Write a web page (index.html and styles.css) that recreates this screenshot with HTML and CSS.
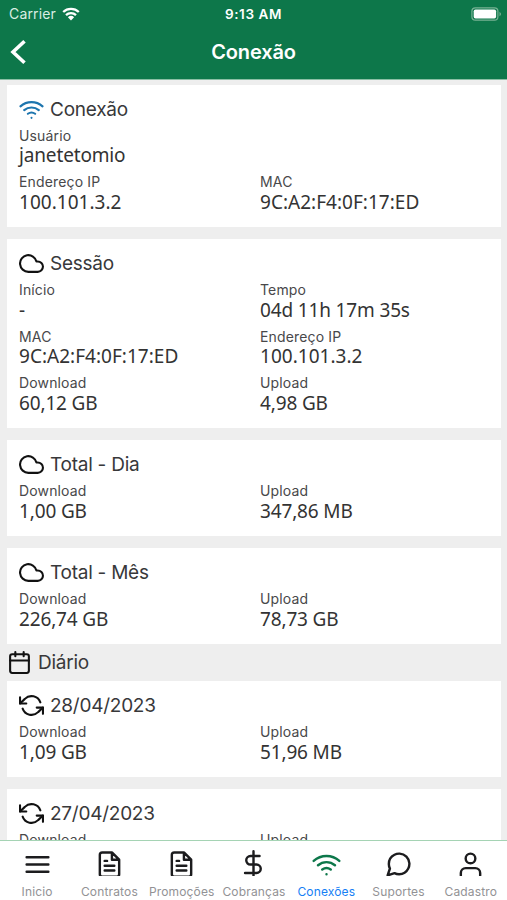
FILE: index.html
```html
<!DOCTYPE html>
<html lang="pt-BR">
<head>
<meta charset="utf-8">
<meta name="viewport" content="width=device-width, initial-scale=1">
<title>Conexão</title>
<link rel="stylesheet" href="styles.css">
</head>
<body>
<svg class="defs" aria-hidden="true">
  <symbol id="wifi" viewBox="0 0 24 24"><path d="M1.4 9a15.9 15.9 0 0 1 21.2 0M5 12.6a10.9 10.9 0 0 1 14 0M8.5 16.1a6 6 0 0 1 7 0M12 20h.01"/></symbol>
  <symbol id="cloud" viewBox="0 0 24 24"><path d="M18 10h-1.26A8 8 0 1 0 9 20h9a5 5 0 0 0 0-10z"/></symbol>
  <symbol id="calendar" viewBox="0 0 24 24"><rect x="3" y="4" width="18" height="18" rx="2"/><path d="M16 2v4M8 2v4M3 10h18"/></symbol>
  <symbol id="refresh" viewBox="0 0 24 24"><path d="M1 4v6h6M23 20v-6h-6"/><path d="M20.49 9A9 9 0 0 0 5.64 5.64L1 10m22 4l-4.64 4.36A9 9 0 0 1 3.51 15"/></symbol>
  <symbol id="file" viewBox="0 0 24 24"><path d="M14 2H6a2 2 0 0 0-2 2v16a2 2 0 0 0 2 2h12a2 2 0 0 0 2-2V8zM14 2v6h6M16 13H8M16 17H8M10 9H8"/></symbol>
</svg>
<div class="app">
  <header class="header">
    <div class="status">
      <div class="carrier"><span>Carrier</span>
        <svg class="signal" viewBox="0 0 18 14"><path d="M1.2 5a11.3 11.3 0 0 1 15.6 0M4 8.2a7.2 7.2 0 0 1 10 0" fill="none" stroke="#fff" stroke-width="2.3"/><path d="M5.9 10.2a4.5 4.5 0 0 1 6.2 0L9 13.5z" fill="#fff"/></svg>
      </div>
      <span class="clock">9:13 AM</span>
      <svg class="battery" viewBox="0 0 31 14"><rect x=".9" y=".8" width="26" height="12.4" rx="3.5" fill="none" stroke="#78b294" stroke-width="1.2"/><rect x="2.7" y="2.5" width="22.4" height="9" rx="1.8" fill="#fff"/><path d="M28.5 4.7q3 2.3 0 4.6z" fill="#78b294"/></svg>
    </div>
    <div class="nav">
      <svg class="back" viewBox="0 0 18 28"><path d="M15.5 3.2L4 14l11.5 10.8"/></svg>
      <h1>Conexão</h1>
    </div>
  </header>
  <main class="content">
    <section class="card">
      <h2><svg class="icon blue"><use href="#wifi"/></svg>Conexão</h2>
      <dl>
        <div class="wide"><dt>Usuário</dt><dd>janetetomio</dd></div>
        <div><dt>Endereço IP</dt><dd class="address">100.101.3.2</dd></div>
        <div><dt>MAC</dt><dd class="address">9C:A2:F4:0F:17:ED</dd></div>
      </dl>
    </section>
    <section class="card">
      <h2><svg class="icon"><use href="#cloud"/></svg>Sessão</h2>
      <dl>
        <div><dt>Início</dt><dd>-</dd></div>
        <div><dt>Tempo</dt><dd>04d 11h 17m 35s</dd></div>
        <div><dt>MAC</dt><dd class="address">9C:A2:F4:0F:17:ED</dd></div>
        <div><dt>Endereço IP</dt><dd class="address">100.101.3.2</dd></div>
        <div><dt>Download</dt><dd>60,12 GB</dd></div>
        <div><dt>Upload</dt><dd>4,98 GB</dd></div>
      </dl>
    </section>
    <section class="card">
      <h2><svg class="icon"><use href="#cloud"/></svg>Total - Dia</h2>
      <dl>
        <div><dt>Download</dt><dd>1,00 GB</dd></div>
        <div><dt>Upload</dt><dd>347,86 MB</dd></div>
      </dl>
    </section>
    <section class="card">
      <h2><svg class="icon"><use href="#cloud"/></svg>Total - Mês</h2>
      <dl>
        <div><dt>Download</dt><dd>226,74 GB</dd></div>
        <div><dt>Upload</dt><dd>78,73 GB</dd></div>
      </dl>
    </section>
    <h2 class="divider"><svg class="icon"><use href="#calendar"/></svg>Diário</h2>
    <section class="card">
      <h2><svg class="icon"><use href="#refresh"/></svg>28/04/2023</h2>
      <dl>
        <div><dt>Download</dt><dd>1,09 GB</dd></div>
        <div><dt>Upload</dt><dd>51,96 MB</dd></div>
      </dl>
    </section>
    <section class="card">
      <h2><svg class="icon"><use href="#refresh"/></svg>27/04/2023</h2>
      <dl>
        <div><dt>Download</dt><dd></dd></div>
        <div><dt>Upload</dt><dd></dd></div>
      </dl>
    </section>
  </main>
  <nav class="tabs">
    <a><svg viewBox="0 0 24 21.5"><path d="M3 6h18M3 12h18M3 18h18"/></svg><span>Inicio</span></a>
    <a><svg viewBox="0 0 24 21.5"><use href="#file" width="24" height="24"/></svg><span>Contratos</span></a>
    <a><svg viewBox="0 0 24 21.5"><use href="#file" width="24" height="24"/></svg><span>Promoções</span></a>
    <a><svg viewBox="0 0 24 21.5"><path d="M12 1v22M17 5H9.5a3.5 3.5 0 0 0 0 7h5a3.5 3.5 0 0 1 0 7H5"/></svg><span>Cobranças</span></a>
    <a class="active"><svg viewBox="0 0 24 21.5"><use href="#wifi" width="24" height="24"/></svg><span>Conexões</span></a>
    <a><svg viewBox="0 0 24 21.5"><path d="M21 11.5a8.38 8.38 0 0 1-.9 3.8 8.5 8.5 0 0 1-7.6 4.7 8.38 8.38 0 0 1-3.8-.9L3 21l1.9-5.7a8.38 8.38 0 0 1-.9-3.8 8.5 8.5 0 0 1 4.7-7.6 8.38 8.38 0 0 1 3.8-.9h.5a8.48 8.48 0 0 1 8 8z"/></svg><span>Suportes</span></a>
    <a><svg viewBox="0 0 24 21.5"><path d="M20 21v-2a4 4 0 0 0-4-4H8a4 4 0 0 0-4 4v2"/><circle cx="12" cy="7" r="4"/></svg><span>Cadastro</span></a>
  </nav>
</div>
</body>
</html>
```
FILE: styles.css
```css
* { box-sizing: border-box; }
body { margin: 0; font-family: Inter, "Liberation Sans", sans-serif; color: #38383a; background: #eee; }
h1, h2, dl, dd { margin: 0; font-weight: 400; }
svg { flex: none; }
.defs { display: none; }
.app { height: 900px; display: flex; flex-direction: column; overflow: hidden; }

.header { flex: none; height: 79.5px; background: #0d774a; color: #fff; border-bottom: 1px solid #8bbfa5; }
.status { height: 27px; padding: 0 5px 0 9px; display: grid; grid-template-columns: 1fr auto 1fr; align-items: center; font-size: 14px; }
.carrier { display: flex; align-items: center; gap: 6px; color: #d9eee3; letter-spacing: .15px; }
.signal { width: 18px; height: 14px; }
.clock { font-weight: 600; font-size: 13.5px; letter-spacing: .6px; margin-right: 4px; }
.battery { width: 31px; height: 14px; justify-self: end; }
.nav { height: 50px; padding-left: 9px; display: grid; grid-template-columns: 18px 1fr 27px; align-items: center; }
.back { width: 18px; height: 28px; fill: none; stroke: #fff; stroke-width: 3.6; }
.nav h1 { text-align: center; font-size: 20px; font-weight: 600; letter-spacing: -.15px; }

.content { flex: 1; min-height: 0; overflow: hidden; padding: 5.2px 6px 0 7px; }
.card { background: #fff; padding: 12px; margin-bottom: 12px; }
.card h2, .divider { display: flex; align-items: center; gap: 6px; font-size: 19px; letter-spacing: -.25px; }
.card h2 { height: 25.5px; }
.icon { width: 25px; height: 25px; fill: none; stroke: #111; stroke-width: 2; stroke-linecap: round; stroke-linejoin: round; }
.icon.blue { stroke: #1d75ae; }
dl { display: grid; grid-template-columns: 241px 1fr; }
.wide { grid-column: 1 / -1; }
dl > div { height: 46.5px; padding-top: 5.5px; }
dt { font-size: 14px; line-height: 16px; letter-spacing: .15px; color: #48484a; }
dd { font: 19px/24px "Noto Sans", "Open Sans", sans-serif; letter-spacing: -.15px; color: #333; white-space: nowrap; margin-top: -.4px; }
.address { letter-spacing: .02px; }
.divider { height: 36.8px; margin-top: -12px; }

.tabs { flex: none; height: 60px; padding-left: 1px; background: #fff; border-top: 1px solid #a5d3b4; display: grid; grid-template-columns: repeat(7, 1fr); }
.tabs a { display: flex; flex-direction: column; align-items: center; padding-top: 9px; color: #929295; font-size: 12px; letter-spacing: .15px; }
.tabs svg { width: 29px; height: 26px; overflow: hidden; fill: none; stroke: #1c1c1e; stroke-width: 2; stroke-linecap: round; stroke-linejoin: round; }
.tabs span { line-height: 16px; margin-top: 8px; }
.tabs .active { color: #1680f5; }
.tabs .active svg { stroke: #0d774a; }
```
